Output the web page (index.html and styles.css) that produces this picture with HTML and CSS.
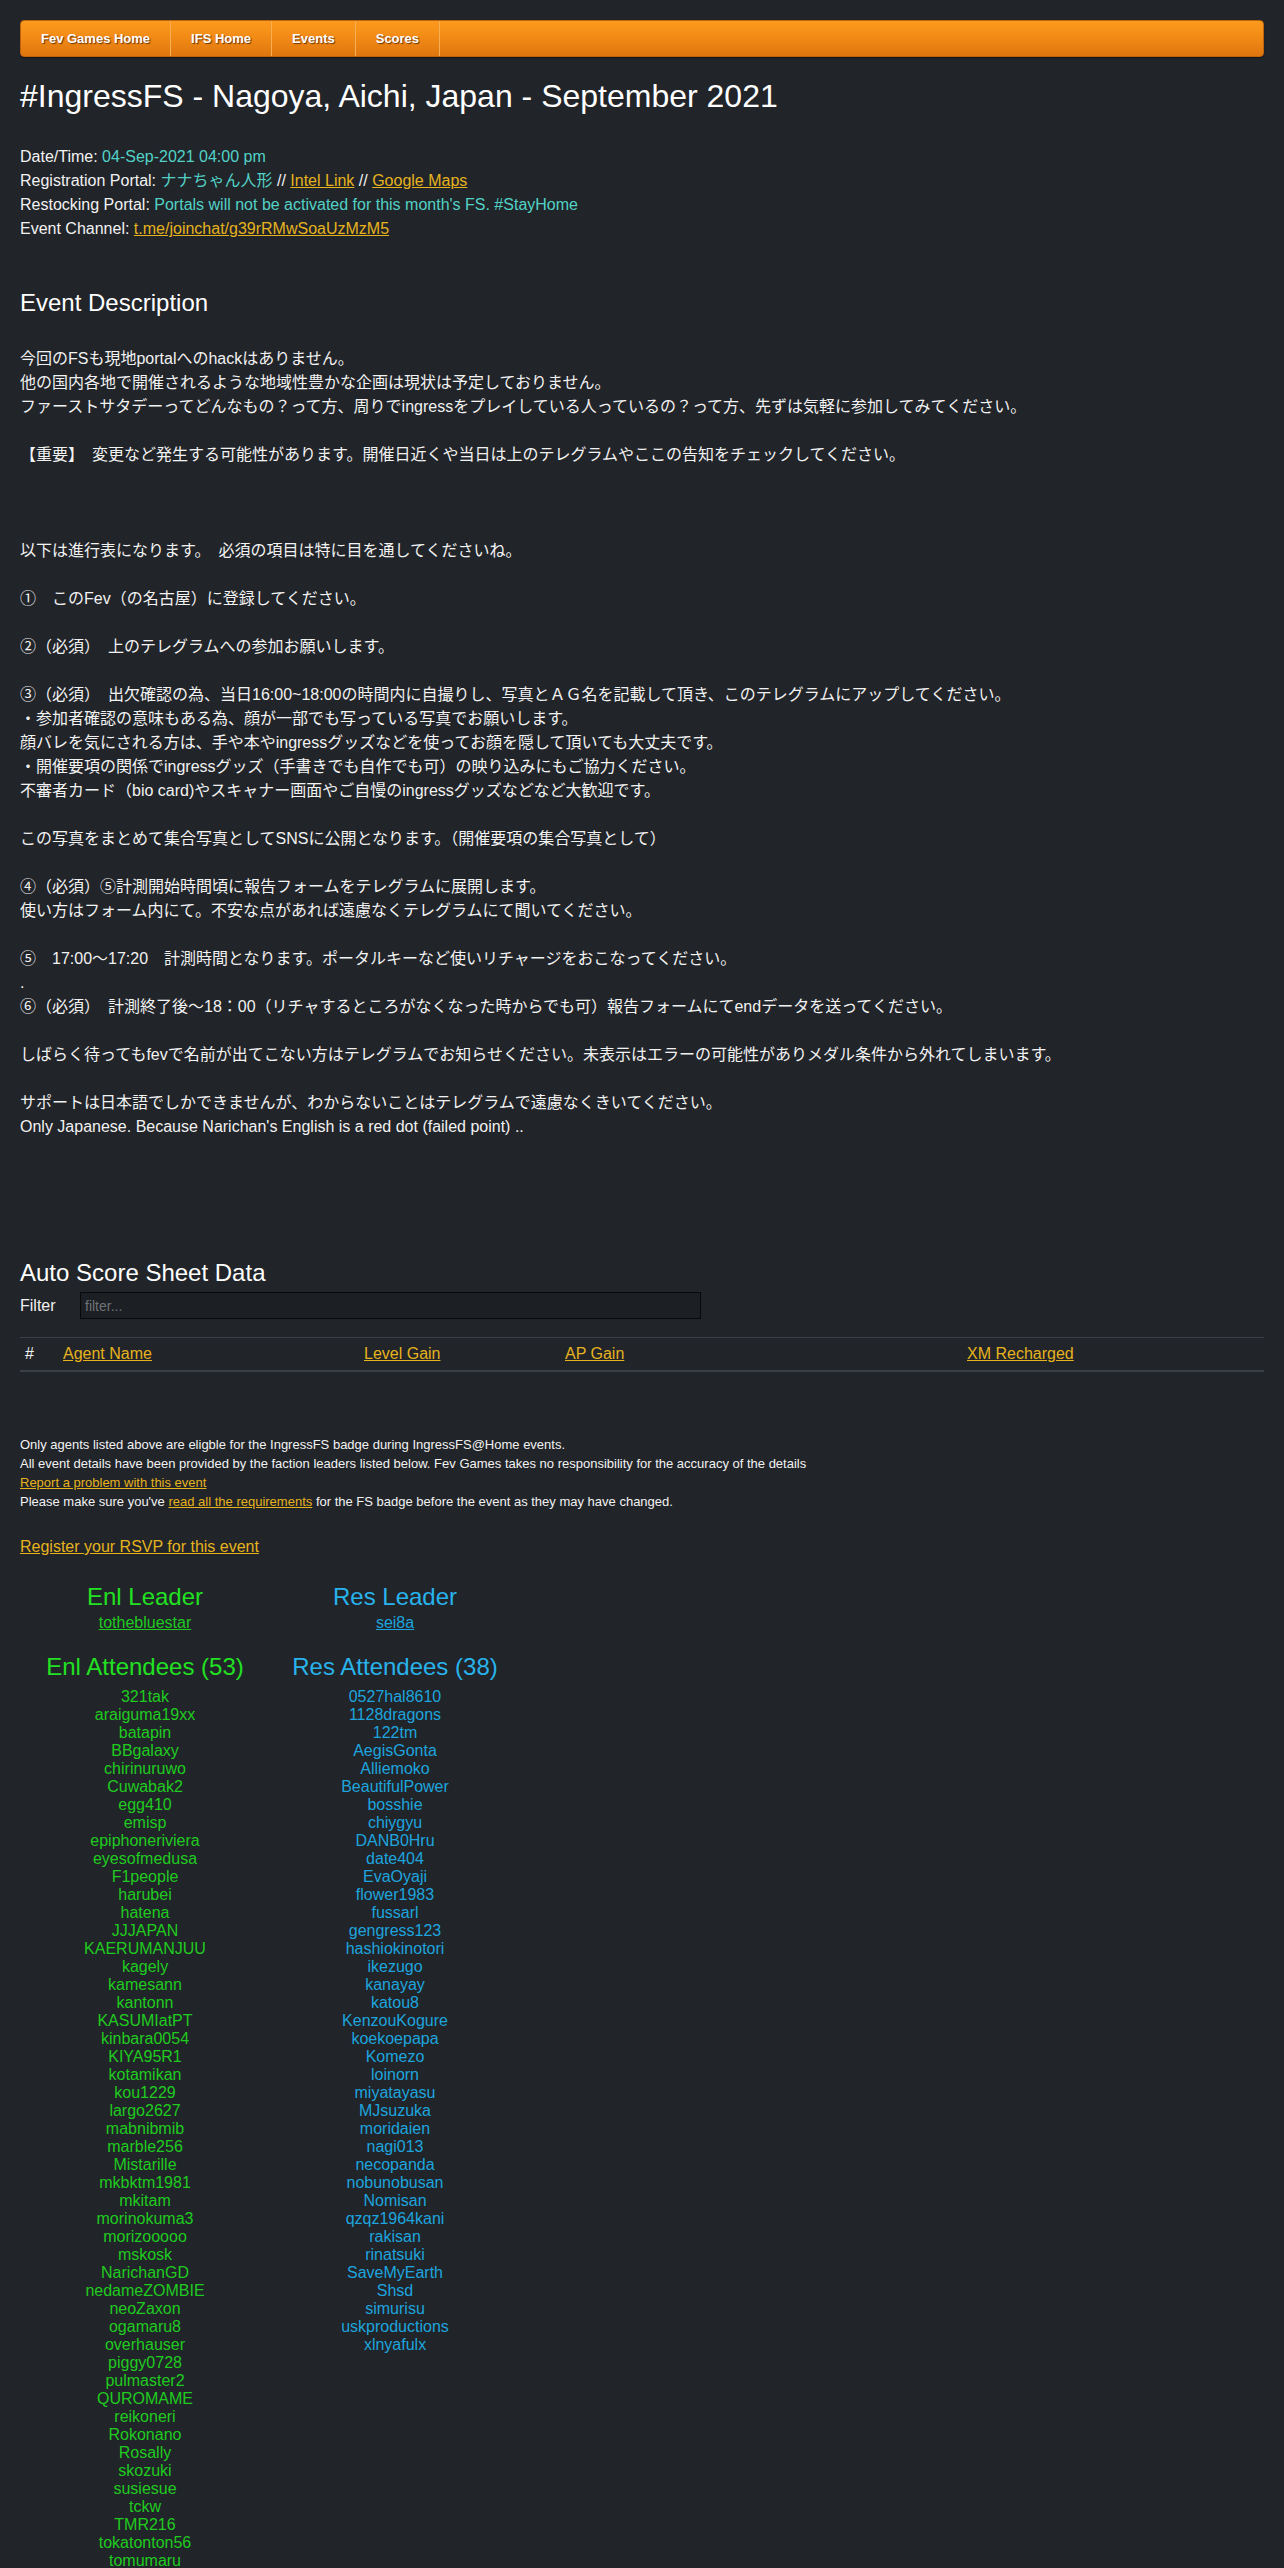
FILE: index.html
```html
<!DOCTYPE html>
<html lang="ja">
<head>
<meta charset="utf-8">
<title>#IngressFS - Nagoya, Aichi, Japan - September 2021</title>
<link rel="stylesheet" href="styles.css">
</head>
<body>
<div class="page">
  <nav class="topnav">
    <a class="nav-item" href="#">Fev Games Home</a>
    <a class="nav-item" href="#">IFS Home</a>
    <a class="nav-item" href="#">Events</a>
    <a class="nav-item" href="#">Scores</a>
  </nav>

  <h1 class="title">#IngressFS - Nagoya, Aichi, Japan - September 2021</h1>

  <div class="info">
    <div>Date/Time: <span class="val">04-Sep-2021 04:00 pm</span></div>
    <div>Registration Portal: <span class="val">ナナちゃん人形</span> // <a href="#">Intel Link</a> // <a href="#">Google Maps</a></div>
    <div>Restocking Portal: <span class="val">Portals will not be activated for this month's FS. #StayHome</span></div>
    <div>Event Channel: <a href="#">t.me/joinchat/g39rRMwSoaUzMzM5</a></div>
  </div>

  <h2 class="section-title desc-title">Event Description</h2>

  <div class="desc">
今回のFSも現地portalへのhackはありません。<br>
他の国内各地で開催されるような地域性豊かな企画は現状は予定しておりません。<br>
ファーストサタデーってどんなもの？って方、周りでingressをプレイしている人っているの？って方、先ずは気軽に参加してみてください。<br>
<br>
【重要】　変更など発生する可能性があります。開催日近くや当日は上のテレグラムやここの告知をチェックしてください。<br>
<br>
<br>
<br>
以下は進行表になります。　必須の項目は特に目を通してくださいね。<br>
<br>
①　このFev（の名古屋）に登録してください。<br>
<br>
②（必須）　上のテレグラムへの参加お願いします。<br>
<br>
③（必須）　出欠確認の為、当日16:00~18:00の時間内に自撮りし、写真とＡＧ名を記載して頂き、このテレグラムにアップしてください。<br>
・参加者確認の意味もある為、顔が一部でも写っている写真でお願いします。<br>
顔バレを気にされる方は、手や本やingressグッズなどを使ってお顔を隠して頂いても大丈夫です。<br>
・開催要項の関係でingressグッズ（手書きでも自作でも可）の映り込みにもご協力ください。<br>
不審者カード（bio card)やスキャナー画面やご自慢のingressグッズなどなど大歓迎です。<br>
<br>
この写真をまとめて集合写真としてSNSに公開となります。（開催要項の集合写真として）<br>
<br>
④（必須）⑤計測開始時間頃に報告フォームをテレグラムに展開します。<br>
使い方はフォーム内にて。不安な点があれば遠慮なくテレグラムにて聞いてください。<br>
<br>
⑤　17:00～17:20　計測時間となります。ポータルキーなど使いリチャージをおこなってください。<br>
.<br>
⑥（必須）　計測終了後～18：00（リチャするところがなくなった時からでも可）報告フォームにてendデータを送ってください。<br>
<br>
しばらく待ってもfevで名前が出てこない方はテレグラムでお知らせください。未表示はエラーの可能性がありメダル条件から外れてしまいます。<br>
<br>
サポートは日本語でしかできませんが、わからないことはテレグラムで遠慮なくきいてください。<br>
Only Japanese. Because Narichan's English is a red dot (failed point) ..
  </div>

  <h2 class="section-title score-title">Auto Score Sheet Data</h2>

  <div class="filter-row">
    <label class="filter-label" for="filter">Filter</label>
    <input class="filter-input" id="filter" type="text" placeholder="filter...">
  </div>

  <table class="score-table">
    <colgroup>
      <col class="c-num">
      <col class="c-agent">
      <col class="c-level">
      <col class="c-ap">
      <col class="c-xm">
    </colgroup>
    <thead>
      <tr>
        <th>#</th>
        <th><a href="#">Agent Name</a></th>
        <th><a href="#">Level Gain</a></th>
        <th><a href="#">AP Gain</a></th>
        <th><a href="#">XM Recharged</a></th>
      </tr>
    </thead>
    <tbody></tbody>
  </table>

  <div class="notes">
    <div>Only agents listed above are eligble for the IngressFS badge during IngressFS@Home events.</div>
    <div>All event details have been provided by the faction leaders listed below. Fev Games takes no responsibility for the accuracy of the details</div>
    <div><a href="#">Report a problem with this event</a></div>
    <div>Please make sure you've <a href="#">read all the requirements</a> for the FS badge before the event as they may have changed.</div>
  </div>

  <div class="rsvp"><a href="#">Register your RSVP for this event</a></div>

  <div class="factions">
    <div class="faction enl">
      <h3 class="leader-title">Enl Leader</h3>
      <div class="leader-name"><a href="#">tothebluestar</a></div>
      <h3 class="att-title">Enl Attendees (53)</h3>
      <div class="names">
        <div>321tak</div>
        <div>araiguma19xx</div>
        <div>batapin</div>
        <div>BBgalaxy</div>
        <div>chirinuruwo</div>
        <div>Cuwabak2</div>
        <div>egg410</div>
        <div>emisp</div>
        <div>epiphoneriviera</div>
        <div>eyesofmedusa</div>
        <div>F1people</div>
        <div>harubei</div>
        <div>hatena</div>
        <div>JJJAPAN</div>
        <div>KAERUMANJUU</div>
        <div>kagely</div>
        <div>kamesann</div>
        <div>kantonn</div>
        <div>KASUMIatPT</div>
        <div>kinbara0054</div>
        <div>KIYA95R1</div>
        <div>kotamikan</div>
        <div>kou1229</div>
        <div>largo2627</div>
        <div>mabnibmib</div>
        <div>marble256</div>
        <div>Mistarille</div>
        <div>mkbktm1981</div>
        <div>mkitam</div>
        <div>morinokuma3</div>
        <div>morizooooo</div>
        <div>mskosk</div>
        <div>NarichanGD</div>
        <div>nedameZOMBIE</div>
        <div>neoZaxon</div>
        <div>ogamaru8</div>
        <div>overhauser</div>
        <div>piggy0728</div>
        <div>pulmaster2</div>
        <div>QUROMAME</div>
        <div>reikoneri</div>
        <div>Rokonano</div>
        <div>Rosally</div>
        <div>skozuki</div>
        <div>susiesue</div>
        <div>tckw</div>
        <div>TMR216</div>
        <div>tokatonton56</div>
        <div>tomumaru</div>
      </div>
    </div>
    <div class="faction res">
      <h3 class="leader-title">Res Leader</h3>
      <div class="leader-name"><a href="#">sei8a</a></div>
      <h3 class="att-title">Res Attendees (38)</h3>
      <div class="names">
        <div>0527hal8610</div>
        <div>1128dragons</div>
        <div>122tm</div>
        <div>AegisGonta</div>
        <div>Alliemoko</div>
        <div>BeautifulPower</div>
        <div>bosshie</div>
        <div>chiygyu</div>
        <div>DANB0Hru</div>
        <div>date404</div>
        <div>EvaOyaji</div>
        <div>flower1983</div>
        <div>fussarl</div>
        <div>gengress123</div>
        <div>hashiokinotori</div>
        <div>ikezugo</div>
        <div>kanayay</div>
        <div>katou8</div>
        <div>KenzouKogure</div>
        <div>koekoepapa</div>
        <div>Komezo</div>
        <div>loinorn</div>
        <div>miyatayasu</div>
        <div>MJsuzuka</div>
        <div>moridaien</div>
        <div>nagi013</div>
        <div>necopanda</div>
        <div>nobunobusan</div>
        <div>Nomisan</div>
        <div>qzqz1964kani</div>
        <div>rakisan</div>
        <div>rinatsuki</div>
        <div>SaveMyEarth</div>
        <div>Shsd</div>
        <div>simurisu</div>
        <div>uskproductions</div>
        <div>xlnyafulx</div>
      </div>
    </div>
  </div>
</div>
</body>
</html>
```

FILE: styles.css
```css
* { box-sizing: border-box; }

html, body {
  margin: 0;
  padding: 0;
  background: #212429;
}

body {
  font-family: "Liberation Sans", Arial, "Noto Sans CJK JP", sans-serif;
  font-size: 16px;
  line-height: 24px;
  color: #f2f2f2;
}

a {
  color: #e6b31e;
  text-decoration: underline;
}

.page {
  padding: 20px 20px 40px;
}

/* Top navigation */
.topnav {
  display: flex;
  height: 37px;
  background: linear-gradient(to bottom, #fb9b1d 0%, #f28b16 45%, #df760e 100%);
  border: 1px solid #c0640b;
  border-radius: 4px;
  box-shadow: 0 1px 1px rgba(0, 0, 0, 0.4);
}

.nav-item {
  display: block;
  padding: 0 20px;
  line-height: 35px;
  font-size: 13px;
  font-weight: bold;
  color: #ffffff;
  text-decoration: none;
  text-shadow: 1px 1px 1px rgba(60, 25, 0, 0.75);
  border-right: 1px solid #f7ae55;
}

/* Title */
.title {
  margin: 20px 0 0;
  font-size: 32px;
  line-height: 38px;
  font-weight: normal;
  color: #ffffff;
}

.info {
  margin-top: 30px;
}

.val {
  color: #52d2c6;
}

.section-title {
  margin: 0;
  font-size: 24px;
  line-height: 28px;
  font-weight: normal;
  color: #ffffff;
}

.desc-title {
  margin-top: 48px;
}

.desc {
  margin-top: 30px;
}

.score-title {
  margin-top: 120px;
}

/* Filter */
.filter-row {
  display: flex;
  align-items: center;
  margin-top: 5px;
}

.filter-label {
  width: 60px;
}

.filter-input {
  width: 621px;
  height: 27px;
  padding: 0 4px;
  background: #1c1f23;
  border: 1px solid #08090a;
  color: #dddddd;
  font-family: "Liberation Sans", Arial, sans-serif;
  font-size: 14px;
}

.filter-input::placeholder {
  color: #6f7277;
}

/* Score table */
.score-table {
  width: 100%;
  margin-top: 18px;
  border-collapse: collapse;
  table-layout: fixed;
}

.c-num { width: 38px; }
.c-agent { width: 301px; }
.c-level { width: 201px; }
.c-ap { width: 402px; }

.score-table th {
  padding: 4px 5px;
  text-align: left;
  font-weight: normal;
  border-top: 1px solid #3a3e45;
  border-bottom: 2px solid #3a3e45;
}

/* Notes */
.notes {
  margin-top: 63px;
  font-size: 13px;
  line-height: 19px;
}

.rsvp {
  margin-top: 24px;
}

/* Factions */
.factions {
  display: flex;
  margin-top: 24px;
}

.faction {
  width: 250px;
  text-align: center;
}

.leader-title {
  margin: 0;
  font-size: 24px;
  line-height: 28px;
  font-weight: normal;
}

.leader-name {
  margin-top: 3px;
  line-height: 18px;
}

.att-title {
  margin: 21px 0 0;
  font-size: 24px;
  line-height: 28px;
  font-weight: normal;
}

.names {
  margin-top: 7px;
  line-height: 18px;
}

.enl .leader-title,
.enl .att-title { color: #22e022; }
.enl .names,
.enl .leader-name a { color: #20cb20; }

.res .leader-title,
.res .att-title { color: #28b3ec; }
.res .names,
.res .leader-name a { color: #1ea4de; }
```
